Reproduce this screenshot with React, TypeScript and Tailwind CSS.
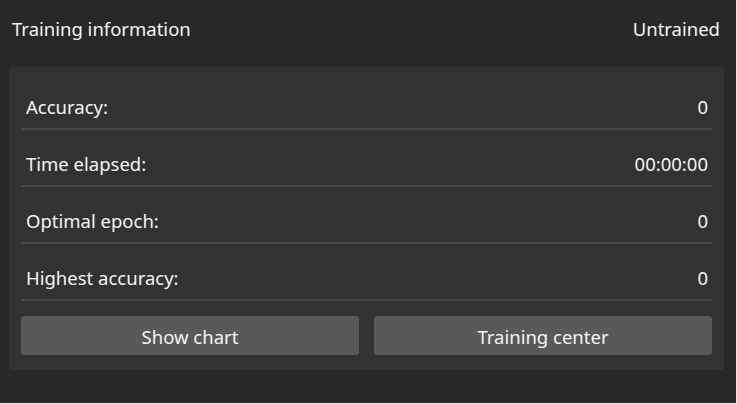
import React from "react";

const rows = [
  { label: "Accuracy:", value: "0" },
  { label: "Time elapsed:", value: "00:00:00" },
  { label: "Optimal epoch:", value: "0" },
  { label: "Highest accuracy:", value: "0" },
];

export default function App() {
  return (
    <div
      className="w-[737px] h-[404px] bg-[#282828] text-[#f4f4f4] text-[18.5px] border-r border-b border-[#e8e8e8] overflow-hidden"
      style={{ fontFamily: '"Noto Sans", "Open Sans", sans-serif' }}
    >
      <div className="flex items-center justify-between pl-[12px] pr-[16px] h-[57px] pt-[1px]">
        <span>Training information</span>
        <span>Untrained</span>
      </div>
      <div className="mx-[9px] mt-[10px] w-[715px] rounded-[3px] bg-[#323232] px-[12px] pt-[6px] pb-[15px]">
        {rows.map((r) => (
          <div key={r.label}>
            <div className="mt-[11px] h-[44px] flex items-center justify-between pl-[5px] pr-[4px] pt-[1px]">
              <span>{r.label}</span>
              <span>{r.value}</span>
            </div>
            <div className="h-[2px] bg-[#4a4a4a]" />
          </div>
        ))}
        <div className="mt-[15px] flex gap-[15px]">
          <button className="flex-1 h-[39px] rounded-[3px] bg-[#595959] text-[#f4f4f4] flex items-center justify-center pt-[2px]">
            Show chart
          </button>
          <button className="flex-1 h-[39px] rounded-[3px] bg-[#595959] text-[#f4f4f4] flex items-center justify-center pt-[2px]">
            Training center
          </button>
        </div>
      </div>
    </div>
  );
}
